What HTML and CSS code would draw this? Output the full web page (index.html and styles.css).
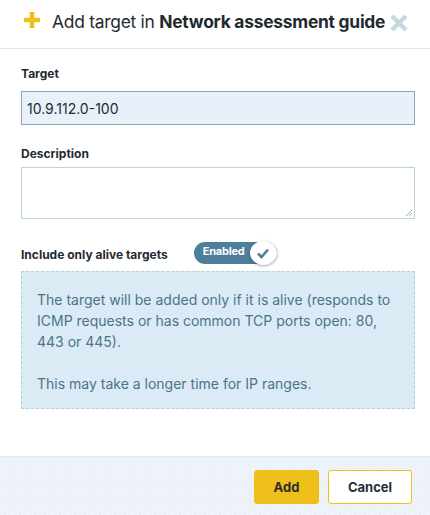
FILE: index.html
```html
<!DOCTYPE html>
<html>
<head>
<meta charset="utf-8">
<link rel="stylesheet" href="styles.css">
</head>
<body>
<div class="dialog">
  <header class="head">
    <svg class="plus" width="18" height="18" viewBox="0 0 18 18"><path d="M9 1v16M1 9h16" stroke="#f0bf1a" stroke-width="4.5"/></svg>
    <h1 class="title">Add target in <b>Network assessment guide</b></h1>
    <svg class="close" width="18" height="18" viewBox="0 0 18 18"><path d="M2 2l14 14M16 2L2 16" stroke="#c3d8df" stroke-width="4.5"/></svg>
  </header>
  <main class="body">
    <label class="label">Target</label>
    <div class="input">10.9.112.0-100</div>
    <label class="label desc-label">Description</label>
    <div class="textarea">
      <svg class="grip" width="8" height="8" viewBox="0 0 8 8"><path d="M7 1L1 7M7 4L4 7" stroke="#999" stroke-width="0.8"/></svg>
    </div>
    <div class="alive-row">
      <span class="label alive">Include only alive targets</span>
      <span class="toggle">
        <span class="toggle-text">Enabled</span>
        <span class="knob"><svg width="14" height="12" viewBox="0 0 14 12"><path d="M2 6.5l3.5 3.5L12 2.5" fill="none" stroke="#4e7f9a" stroke-width="2.6"/></svg></span>
      </span>
    </div>
    <div class="info">
      <p>The target will be added only if it is alive (responds to ICMP requests or has common TCP ports open: 80, 443 or 445).</p>
      <p>This may take a longer time for IP ranges.</p>
    </div>
  </main>
  <footer class="foot">
    <button class="btn add">Add</button>
    <button class="btn cancel">Cancel</button>
  </footer>
</div>
</body>
</html>
```
FILE: styles.css
```css
* { box-sizing: border-box; }
html, body { margin: 0; padding: 0; background: #fff; }
body { font-family: Inter, "Noto Sans", sans-serif; color: #1f2a30; width: 430px; height: 515px; overflow: hidden; }
.dialog { display: flex; flex-direction: column; height: 515px; }
.head { display: flex; align-items: center; height: 49px; border-bottom: 1px solid #dde9ee; padding: 0 0 6px 23px; }
.plus { flex: none; margin-right: 11px; margin-top: -2px; }
.title { margin: 0; font-size: 17.4px; font-weight: 400; letter-spacing: -0.25px; color: #1f2a30; white-space: nowrap; }
.title b { font-weight: 700; }
.close { flex: none; margin-left: 5px; margin-top: 3px; }
.body { flex: 1; padding: 17px 15px 0 21px; display: flex; flex-direction: column; }
.label { display: block; font-size: 12px; font-weight: 700; color: #1f2a30; }
.input { margin-top: 10px; height: 34px; border: 1px solid #8fa6b6; background: #e8f0f9; font-size: 14px; padding: 8px 0 0 5px; color: #1f2a30; }
.desc-label { margin-top: 21px; }
.textarea { margin-top: 6px; height: 52px; border: 1px solid #b9d5de; position: relative; }
.grip { position: absolute; right: 1px; bottom: 1px; }
.alive-row { display: flex; align-items: center; margin-top: 23px; height: 22px; }
.alive { margin-top: 3px; }
.toggle { margin-left: 26px; width: 83px; height: 22px; border-radius: 11px; background: #4e7f9a; display: flex; align-items: center; position: relative; }
.toggle-text { color: #fff; font-size: 11px; letter-spacing: -0.2px; font-weight: 700; margin-left: 9px; margin-top: -4px; }
.knob { position: absolute; right: 0; top: -1px; width: 27px; height: 24px; border-radius: 50%; background: #fff; box-shadow: 0 1px 3px rgba(0,0,0,0.35); display: flex; align-items: center; justify-content: center; }
.info { margin-top: 7px; height: 138px; background: #dbebf5; border: 1px dashed #b4d1df; padding: 17px 16px 0 15px; color: #4b7488; font-size: 14px; line-height: 21px; }
.info p { margin: 0 0 21px; }
.foot { height: 59px; background-color: #edf1f8; background-image: radial-gradient(#fafcff 0.6px, transparent 0.7px); background-size: 5px 5px; border-top: 1px dotted #dfe6ef; display: flex; justify-content: flex-end; align-items: flex-start; padding: 13px 18px 0 0; gap: 9px; }
.btn { font-family: Inter, "Noto Sans", sans-serif; font-size: 13px; font-weight: 700; height: 34px; border-radius: 3px; cursor: pointer; }
.add { width: 65px; background: #f0c01a; border: 1px solid #f0c01a; color: #2b2b2b; }
.cancel { width: 84px; background: #fff; border: 1px solid #f0c01a; color: #1f2f3c; }
```
